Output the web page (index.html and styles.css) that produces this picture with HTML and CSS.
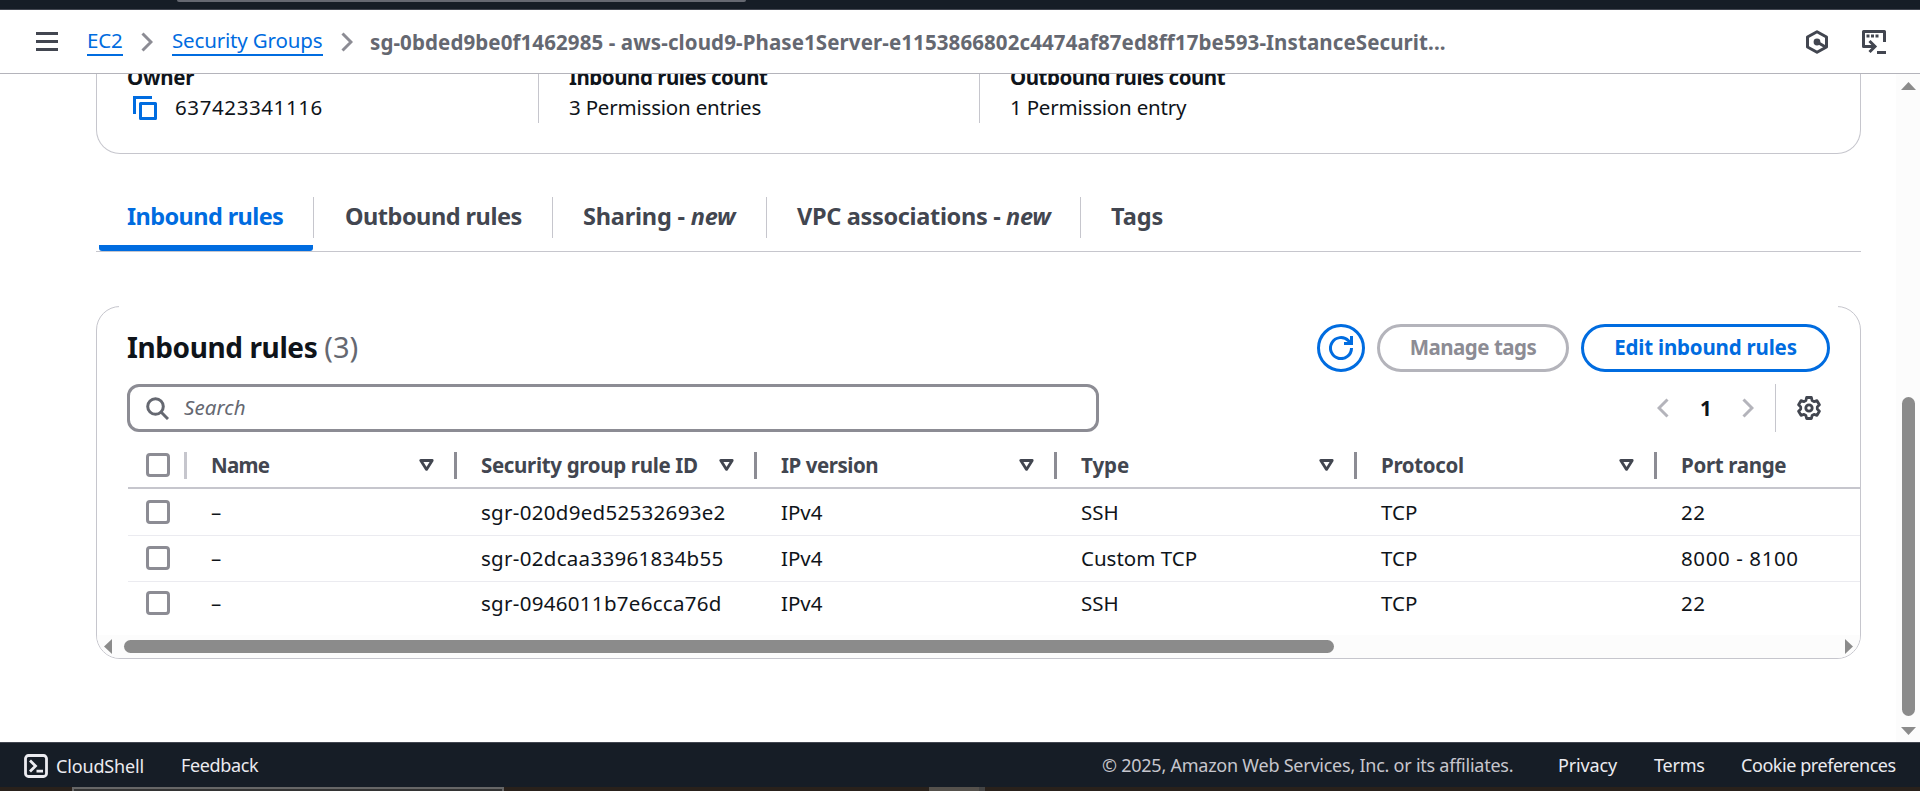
FILE: index.html
```html
<!DOCTYPE html>
<html lang="en">
<head>
<meta charset="utf-8">
<title>Security group | EC2</title>
<link rel="stylesheet" href="styles.css">
</head>
<body>
<svg class="defs" width="0" height="0">
  <symbol id="sort" viewBox="0 0 15 12"><path d="M1.8 1.5h11.4L7.5 10.4z" fill="none" stroke="#424650" stroke-width="2.8" stroke-linejoin="round"/></symbol>
  <symbol id="chev" viewBox="0 0 12 20"><path d="M1.5 1.5L10 10l-8.500 8.500" fill="none" stroke="currentColor" stroke-width="3"/></symbol>
</svg>
<div class="topbar"><div class="topsearch"></div></div>
<header class="header">
  <svg class="menu" width="22" height="19"><path d="M0 1.500h22M0 9.500h22M0 17.500h22" stroke="#424650" stroke-width="3"/></svg>
  <a class="link ec2">EC2</a>
  <svg class="chev c1" width="12" height="20"><use href="#chev"/></svg>
  <a class="link groups">Security Groups</a>
  <svg class="chev c2" width="12" height="20"><use href="#chev"/></svg>
  <span class="crumb">sg-0bded9be0f1462985 - aws-cloud9-Phase1Server-e1153866802c4474af87ed8ff17be593-InstanceSecurit...</span>
  <div class="tools">
    <svg width="24" height="24" viewBox="0 0 24 24" fill="none" stroke="#424650" stroke-width="3"><path d="M12 1.700l9.500 5.300v10L12 22.300 2.500 17V7z" stroke-linejoin="round"/><path d="M12 12l9 5.200"/><circle cx="12" cy="12" r="3.400" fill="#424650" stroke="none"/></svg>
    <svg width="24" height="24" viewBox="0 0 24 24" fill="none" stroke="#424650" stroke-width="3"><path d="M22.500 12V1.500h-21v15H12" stroke-linejoin="round"/><path d="M7.500 11l5.500 5.500L7.500 22M15 22.500h9"/><path d="M4.500 6h3M9 6h3M13.500 6h3" stroke-width="3.200"/></svg>
  </div>
</header>
<div class="viewport">
  <main class="content">
    <section class="details">
      <div class="detail"><b class="own">Owner</b><div class="value"><svg width="24" height="24" viewBox="0 0 24 24" fill="none" stroke="#006ce0" stroke-width="3"><path d="M1.500 18V1.500H19"/><rect x="7.500" y="7.500" width="15" height="15" stroke-linejoin="round"/></svg><span class="id">637423341116</span></div></div>
      <div class="detail"><b>Inbound rules count</b><div class="value"><span>3 Permission entries</span></div></div>
      <div class="detail"><b>Outbound rules count</b><div class="value"><span>1 Permission entry</span></div></div>
    </section>
    <nav class="tabs">
      <a class="tab active">Inbound rules</a><a class="tab t2">Outbound rules</a><a class="tab t3">Sharing - <i>new</i></a><a class="tab t4">VPC associations - <i>new</i></a><a class="tab t5">Tags</a>
    </nav>
    <section class="panel">
      <div class="panelhead">
        <h2><span>Inbound rules</span> <em>(3)</em></h2>
        <div class="actions">
          <button class="btn refresh"><svg width="24" height="24" viewBox="0 0 24 24" fill="none" stroke="#006ce0" stroke-width="3"><path d="M22.500 12A10.500 10.500 0 1 1 19.500 4.700L22 7.500"/><path d="M22.500 0v7.500H15"/></svg></button>
          <button class="btn manage">Manage tags</button>
          <button class="btn edit">Edit inbound rules</button>
        </div>
      </div>
      <div class="filters">
        <div class="search"><svg width="23" height="23" viewBox="0 0 23 23" fill="none" stroke="#656871" stroke-width="3"><circle cx="9.500" cy="9.500" r="7.800"/><path d="M15 15l7 7"/></svg><span>Search</span></div>
        <div class="pager">
          <svg class="prev" width="12" height="20"><use href="#chev"/></svg><b>1</b><svg width="12" height="20"><use href="#chev"/></svg>
          <div class="gear"><svg width="24" height="24" viewBox="0 0 24 24" fill="none" stroke="#424650" stroke-width="2.800" stroke-linejoin="round"><path d="M9.600 1.500h4.800l.7 3 1.900 1.100 3-.9 2.400 4-2.100 2.200v2.200l2.100 2.200-2.400 4-3-.9-1.900 1.100-.7 3H9.600l-.7-3L7 18.400l-3 .9-2.400-4 2.100-2.200v-2.200L1.600 8.700l2.400-4 3 .9 1.900-1.100z"/><circle cx="12" cy="12" r="3.200"/></svg></div>
        </div>
      </div>
      <div class="table">
        <div class="row head"><div class="cell sel"><i class="box"></i></div><div class="cell name">Name<svg width="15" height="12"><use href="#sort"/></svg></div><div class="cell">Security group rule ID<svg width="15" height="12"><use href="#sort"/></svg></div><div class="cell ip">IP version<svg width="15" height="12"><use href="#sort"/></svg></div><div class="cell type">Type<svg width="15" height="12"><use href="#sort"/></svg></div><div class="cell">Protocol<svg width="15" height="12"><use href="#sort"/></svg></div><div class="cell last">Port range</div></div>
        <div class="row first"><div class="cell sel"><i class="box"></i></div><div class="cell">–</div><div class="cell rule">sgr-020d9ed52532693e2</div><div class="cell">IPv4</div><div class="cell">SSH</div><div class="cell">TCP</div><div class="cell port">22</div></div>
        <div class="row mid"><div class="cell sel"><i class="box"></i></div><div class="cell">–</div><div class="cell rule">sgr-02dcaa33961834b55</div><div class="cell">IPv4</div><div class="cell">Custom TCP</div><div class="cell">TCP</div><div class="cell port">8000 - 8100</div></div>
        <div class="row end"><div class="cell sel"><i class="box"></i></div><div class="cell">–</div><div class="cell rule">sgr-0946011b7e6cca76d</div><div class="cell">IPv4</div><div class="cell">SSH</div><div class="cell">TCP</div><div class="cell port">22</div></div>
      </div>
      <div class="hscroll"><svg width="8" height="15"><path d="M8 0v15L0 7.500z" fill="#8b8b8b"/></svg><div class="hthumb"></div><svg width="8" height="15"><path d="M0 0v15l8-7.500z" fill="#8b8b8b"/></svg></div>
    </section>
  </main>
  <div class="vscroll"><svg width="15" height="8"><path d="M0 8h15L7.500 0z" fill="#8b8b8b"/></svg><div class="vthumb"></div><svg width="15" height="8"><path d="M0 0h15L7.500 8z" fill="#8b8b8b"/></svg></div>
</div>
<footer class="footer">
  <svg width="24" height="24" viewBox="0 0 24 24" fill="none" stroke="#ebebf0" stroke-width="2.800"><rect x="1.500" y="1.500" width="21" height="21" rx="3"/><path d="M6 6.500l5.500 5.500L6 17.500M12.500 17.200h6.500"/></svg>
  <a class="shell">CloudShell</a><a class="feedback">Feedback</a>
  <span class="copy">© 2025, Amazon Web Services, Inc. or its affiliates.</span>
  <a class="privacy">Privacy</a><a class="terms">Terms</a><a class="cookie">Cookie preferences</a>
</footer>
<div class="desk"><div class="deskbox"></div><div class="deskchip"></div></div>
</body>
</html>
```
FILE: styles.css
```css
* { box-sizing: border-box; }
body { margin: 0; width: 1920px; height: 791px; overflow: hidden; display: flex; flex-direction: column; background: #fff; color: #0f141a; font: 20.5px/30px "Noto Sans", "Open Sans", sans-serif; white-space: nowrap; }
svg { display: block; flex: none; }
.defs { position: absolute; }
.topbar { height: 10px; flex: none; background: #161d26; border-bottom: 1px solid #424650; padding-left: 177px; }
.topsearch { width: 569px; height: 2px; background: #656871; border-radius: 0 0 6px 6px; }
.header { height: 64px; flex: none; border-bottom: 1px solid #b4b4bb; display: flex; align-items: center; padding: 0 34px 0 36px; }
.menu { margin-right: 29px; }
.link { color: #006ce0; height: 32px; line-height: 33px; border-bottom: 2px solid #006ce0; align-self: flex-start; margin-top: 14px; letter-spacing: -0.16px; }
.ec2 { width: 36px; }
.groups { width: 151px; }
.chev { color: #8c8c94; }
.c1 { margin: 0 19px 0 18px; }
.c2 { margin: 0 17px 0 18px; }
.crumb { color: #656871; font-weight: 700; letter-spacing: 0.1px; }
.tools { margin-left: auto; display: flex; gap: 33px; }
.viewport { height: 668px; flex: none; display: flex; overflow: hidden; }
.content { flex: 1; padding: 0 35px 0 96px; }
.details { height: 80px; border: 1px solid #c6c6cd; border-top: 0; border-radius: 0 0 24px 24px; display: flex; padding-left: 30px; overflow: hidden; }
.detail { width: 441px; height: 49px; padding-left: 30px; border-left: 1px solid #c6c6cd; display: flex; flex-direction: column; }
.detail:first-child { width: 411px; padding-left: 0; border: 0; }
.detail b { margin-top: -12px; letter-spacing: -0.47px; }
.detail .own { letter-spacing: -0.25px; }
.value { display: flex; align-items: center; height: 30px; letter-spacing: -0.2px; }
.value svg { margin: 2px 18px 0 6px; }
.id { letter-spacing: 0.6px; }
.tabs { height: 55px; margin-top: 43px; border-bottom: 1px solid #c6c6cd; display: flex; align-items: flex-start; font-size: 23.500px; font-weight: 700; color: #424650; }
.tab { height: 41px; line-height: 38px; padding: 0 30px; border-left: 1px solid #c6c6cd; }
.active { color: #006ce0; border: 0; padding-left: 28px; margin-left: 3px; width: 214px; height: 54px; border-bottom: 6px solid #006ce0; border-radius: 3px; letter-spacing: -0.6px; }
.t2 { width: 239px; padding-left: 31px; letter-spacing: -0.5px; }
.t3 { width: 214px; letter-spacing: -0.2px; }
.t4 { width: 314px; letter-spacing: -0.33px; }
.panel { position: relative; margin-top: 54px; height: 353px; border: 1px solid #c6c6cd; border-radius: 24px; display: flex; flex-direction: column; }
/* hides the straight part of the top edge, leaving the rounded corners */
.panel::before { content: ""; position: absolute; top: -1px; left: 22px; right: 22px; height: 2px; background: #fff; }
.panelhead { display: flex; justify-content: space-between; height: 48px; margin: 17px 30px 0 30px; }
h2 { margin: 0; font-size: 28px; line-height: 46px; letter-spacing: -0.4px; }
h2 em { font-style: normal; font-weight: 400; color: #656871; font-size: 29px; letter-spacing: 0; }
.actions { display: flex; gap: 12px; }
.btn { font: inherit; font-weight: 700; height: 48px; padding: 0 0 2px; border: 3px solid #006ce0; border-radius: 24px; background: #fff; color: #006ce0; display: flex; align-items: center; justify-content: center; }
.refresh { width: 48px; padding: 0; }
.manage { width: 192px; border-color: #b4b4bb; color: #8c8c94; letter-spacing: -0.5px; }
.edit { width: 249px; letter-spacing: -0.2px; }
.filters { display: flex; justify-content: space-between; height: 48px; margin: 12px 30px 0 30px; }
.search { width: 972px; border: 3px solid #8c8c94; border-radius: 12px; display: flex; align-items: center; padding-left: 16px; gap: 15px; color: #656871; font-style: italic; }
.search span { margin-top: -2px; letter-spacing: 0.1px; }
.pager { display: flex; align-items: center; color: #b4b4bb; }
.pager b { color: #0f141a; margin: 0 31px; width: 11px; }
.prev { transform: scaleX(-1); }
.gear { height: 48px; border-left: 1px solid #c6c6cd; margin-left: 21px; padding: 12px 9px 0 21px; }
.table { margin-left: 31px; height: 202px; }
.row { display: grid; grid-template-columns: 59px 270px 300px 300px 300px 300px 203px; border-bottom: 1px solid #ebebf0; align-items: center; }
.head { margin-top: 11px; height: 46px; border-bottom: 2px solid #c6c6cd; font-weight: 700; color: #424650; letter-spacing: -0.33px; }
.first { height: 47px; }
.mid { height: 46px; padding-bottom: 2px; }
.end { height: 42px; border: 0; }
.name { letter-spacing: -0.7px; }
.ip { letter-spacing: -0.45px; }
.type { letter-spacing: 0; }
.rule { letter-spacing: 0.3px; }
.port { letter-spacing: 0.6px; }
.cell { padding: 0 22px 0 24px; display: flex; align-items: center; justify-content: space-between; height: 27px; }
.head .cell { border-right: 3px solid #8c8c94; padding-right: 20px; }
.head .sel { border-color: #c6c6cd; padding-right: 0; }
.head .last { border: 0; }
.sel { padding: 0 0 0 18px; }
.box { width: 24px; height: 24px; border: 3px solid #8c8c94; border-radius: 4px; }
.hscroll { margin-top: auto; height: 23px; flex: none; background: #fcfcfc; border-radius: 0 0 23px 23px; display: flex; align-items: center; padding: 0 7px; }
.hthumb { width: 1210px; height: 13px; border-radius: 7px; background: #8b8b8b; margin: 0 auto 0 12px; }
.vscroll { width: 24px; background: #fcfcfc; display: flex; flex-direction: column; align-items: center; padding: 8px 0 7px 1px; }
.vthumb { width: 13px; height: 319px; border-radius: 7px; background: #8b8b8b; margin: auto 0 11px; }
.footer { height: 45px; flex: none; background: #161d26; border-top: 1px solid #424650; display: flex; align-items: center; padding: 2px 24px 0 24px; color: #ebebf0; font-size: 18px; }
.footer a, .footer span { margin-top: -2px; }
.footer .shell { margin: 0 0 0 8px; width: 125px; letter-spacing: -0.15px; }
.feedback { letter-spacing: -0.35px; }
.copy { margin-left: auto; color: #c6c6cd; width: 456px; letter-spacing: -0.24px; }
.privacy { width: 96px; letter-spacing: -0.15px; }
.terms { width: 87px; letter-spacing: -0.2px; }
.cookie { width: 155px; letter-spacing: -0.44px; }
.desk { height: 4px; background: #29211b; display: flex; padding-left: 72px; }
.deskbox { width: 432px; height: 4px; border: 2px solid #666; border-bottom: 0; background: #333; }
.deskchip { margin-left: 425px; width: 56px; background: #55514c; border-right: 6px solid #444; }
```
